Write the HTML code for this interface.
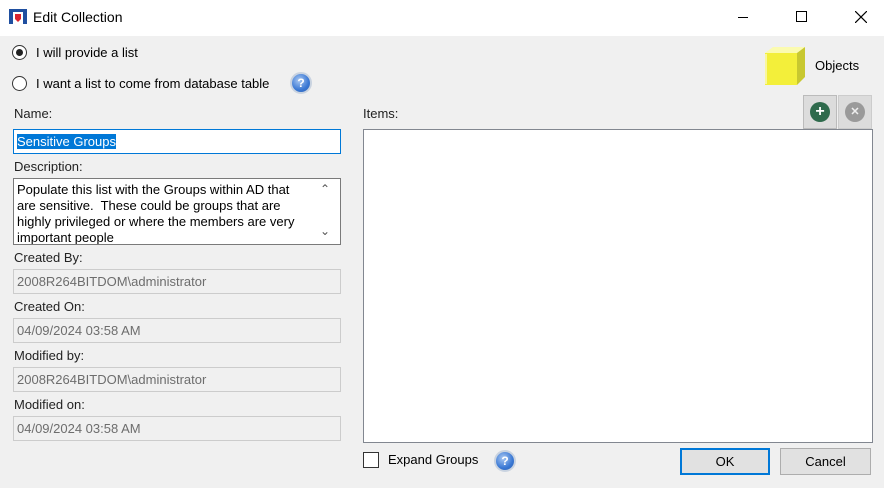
<!DOCTYPE html>
<html><head><style>
*{margin:0;padding:0;box-sizing:border-box}
body{width:884px;height:488px;background:#f0f0f0;font-family:"Liberation Sans",sans-serif;font-size:13px;color:#000;position:relative;overflow:hidden}
.a{position:absolute}
.title{left:0;top:0;width:884px;height:36px;background:#fff}
.inp{position:absolute;left:13px;width:328px;height:25px;border:1px solid #ccc;background:#f0f0f0;color:#6d6d6d;padding:4px 3px;font-size:13px}
.lbl{position:absolute;left:14px;font-size:13px;color:#222}
.help{position:absolute;width:22px;height:22px;border-radius:50%;background:radial-gradient(circle at 40% 35%,#a9c8f2,#3a78d4 60%,#2a5eb0);border:2px solid #c9d3e0;color:#fff;font-weight:bold;font-size:12px;text-align:center;line-height:18px}
.btn{position:absolute;height:27px;border:1px solid #adadad;background:#e1e1e1;text-align:center;line-height:25px;font-size:13px}
</style></head><body>
<div class="a title"></div>
<svg class="a" style="left:9px;top:9px" width="18" height="16" viewBox="0 0 18 16"><rect x="0" y="0" width="18" height="3" fill="#1f4fa0"/><rect x="0" y="3" width="4" height="12" fill="#1f4fa0"/><rect x="14" y="3" width="4" height="12" fill="#1f4fa0"/><path d="M6 5h6v5l-3 3-3-3z" fill="#d9232e"/></svg>
<div class="a" style="left:33px;top:9px;font-size:14px">Edit Collection</div>
<div class="a" style="left:738px;top:17px;width:10px;height:1px;background:#000"></div>
<div class="a" style="left:796px;top:11px;width:11px;height:11px;border:1px solid #000"></div>
<svg class="a" style="left:855px;top:11px" width="12" height="12"><path d="M0 0L12 12M12 0L0 12" stroke="#000" stroke-width="1.2"/></svg>

<div class="a" style="left:12px;top:45px;width:15px;height:15px;border:1px solid #333;border-radius:50%;background:#fff"><div style="position:absolute;left:3px;top:3px;width:7px;height:7px;border-radius:50%;background:#222"></div></div>
<div class="a" style="left:36px;top:45px">I will provide a list</div>
<div class="a" style="left:12px;top:76px;width:15px;height:15px;border:1px solid #333;border-radius:50%;background:#fff"></div>
<div class="a" style="left:36px;top:76px">I want a list to come from database table</div>
<div class="help" style="left:290px;top:72px">?</div>

<div class="lbl" style="top:106px">Name:</div>
<div class="a" style="left:13px;top:129px;width:328px;height:25px;border:1px solid #0078d7;background:#fff;padding:4px 3px"><span style="background:#0078d7;color:#fff">Sensitive Groups</span></div>
<div class="lbl" style="top:159px">Description:</div>
<div class="a" style="left:13px;top:178px;width:328px;height:67px;border:1px solid #7a7a7a;background:#fff;overflow:hidden;padding:3px 0 0 3px;line-height:16px;font-size:13px">Populate this list with the Groups within AD that<br>are sensitive.&nbsp; These could be groups that are<br>highly privileged or where the members are very<br>important people</div>
<div class="a" style="left:320px;top:182px;font-size:12px;color:#555">&#8963;</div>
<div class="a" style="left:320px;top:224px;font-size:12px;color:#555">&#8964;</div>

<div class="lbl" style="top:250px">Created By:</div>
<div class="inp" style="top:269px">2008R264BITDOM\administrator</div>
<div class="lbl" style="top:299px">Created On:</div>
<div class="inp" style="top:318px">04/09/2024 03:58 AM</div>
<div class="lbl" style="top:348px">Modified by:</div>
<div class="inp" style="top:367px">2008R264BITDOM\administrator</div>
<div class="lbl" style="top:397px">Modified on:</div>
<div class="inp" style="top:416px">04/09/2024 03:58 AM</div>

<svg class="a" style="left:763px;top:45px" width="44" height="42" viewBox="0 0 44 42"><path d="M2 8L10 2H42L34 8Z" fill="#fbfbb0"/><path d="M34 8L42 2V32L34 40Z" fill="#c8c830"/><rect x="2" y="8" width="32" height="32" fill="#f3ef3a"/><path d="M3 9V39" stroke="#fff" stroke-width="1"/></svg>
<div class="a" style="left:815px;top:58px;font-size:13px">Objects</div>

<div class="lbl" style="left:363px;top:106px">Items:</div>
<div class="a" style="left:803px;top:95px;width:34px;height:34px;border:1px solid #bbb;background:#dcdcdc"></div>
<div class="a" style="left:810px;top:102px;width:20px;height:20px;border-radius:50%;background:#2e6a4c;color:#fff;text-align:center;line-height:19px;font-weight:bold;font-size:16px">+</div>
<div class="a" style="left:838px;top:95px;width:34px;height:34px;border:1px solid #ccc;background:#dcdcdc"></div>
<div class="a" style="left:845px;top:102px;width:20px;height:20px;border-radius:50%;background:#9a9a9a;color:#eee;text-align:center;line-height:20px;font-weight:bold;font-size:11px">✕</div>
<div class="a" style="left:363px;top:129px;width:510px;height:314px;border:1px solid #828790;background:#fff"></div>

<div class="a" style="left:363px;top:452px;width:16px;height:16px;border:1px solid #333;background:#fff"></div>
<div class="a" style="left:388px;top:452px">Expand Groups</div>
<div class="help" style="left:494px;top:450px">?</div>
<div class="btn" style="left:680px;top:448px;width:90px;border:2px solid #0078d7;line-height:23px">OK</div>
<div class="btn" style="left:780px;top:448px;width:91px">Cancel</div>
</body></html>
